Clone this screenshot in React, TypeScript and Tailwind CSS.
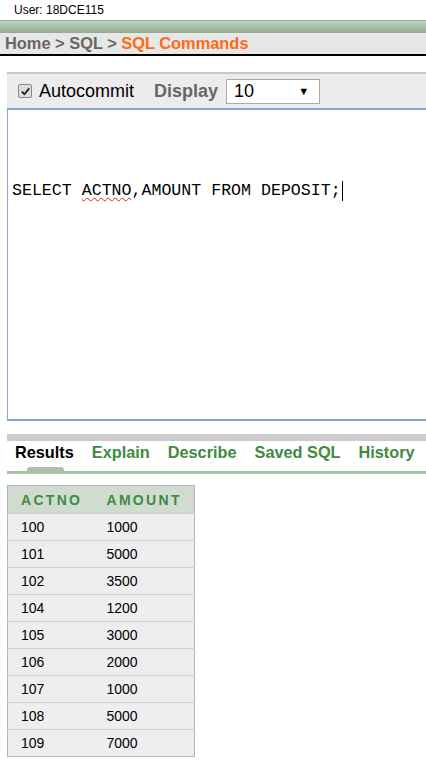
const rows = [
  ['100', '1000'],
  ['101', '5000'],
  ['102', '3500'],
  ['104', '1200'],
  ['105', '3000'],
  ['106', '2000'],
  ['107', '1000'],
  ['108', '5000'],
  ['109', '7000'],
]

const tabs = ['Explain', 'Describe', 'Saved SQL', 'History']

export default function App() {
  return (
    <div className="h-[765px] w-[426px] overflow-hidden bg-white font-['Liberation_Sans',Arial,sans-serif]">
      {/* user line */}
      <div className="h-[20px] pl-[14px] pt-[2px] text-[12px] leading-[16px] text-black">User: 18DCE115</div>

      {/* green header bar */}
      <div className="h-[13px] border-t border-[#a0a8a0] bg-gradient-to-b from-[#bcd3bc] to-[#91ab91]" />

      {/* breadcrumb */}
      <div className="flex h-[23px] items-center border-b-2 border-black bg-[#e6e7e6] pl-[5px] text-[16.4px] font-bold">
        <span className="text-[#666]">Home &gt; SQL &gt;&nbsp;</span>
        <span className="text-[#ff6a13]">SQL Commands</span>
      </div>

      {/* toolbar */}
      <div className="ml-[7px] mt-[16px] flex h-[36px] items-center border-t-2 border-[#c8c8c8] bg-[#ececec]">
        <div className="ml-[11px] flex h-[14px] w-[14px] items-center justify-center rounded-[2px] border border-[#8a8a8a] bg-[#dcdcdc]">
          <svg viewBox="0 0 12 12" className="h-[11px] w-[11px]">
            <path d="M2 6.2 L4.8 9 L10 2.6" fill="none" stroke="#222" strokeWidth="2" />
          </svg>
        </div>
        <span className="ml-[7px] text-[18px] text-black">Autocommit</span>
        <span className="ml-[20px] text-[18px] font-bold text-[#666]">Display</span>
        <div className="ml-[8px] flex h-[25px] w-[94px] items-center justify-between border border-[#a9a9a9] bg-white pl-[7px] pr-[10px]">
          <span className="text-[18px] text-black">10</span>
          <span className="text-[11px] text-black">▼</span>
        </div>
      </div>

      {/* sql editor */}
      <div className="ml-[7px] h-[313px] border-y-2 border-l border-y-[#7ea6dc] border-l-[#8aa8d0] bg-white">
        <div className="flex items-center pt-[69px] pl-[4px] font-['Liberation_Mono','Courier_New',monospace] text-[16.6px] text-black">
          <span>SELECT&nbsp;</span>
          <span className="underline decoration-wavy decoration-[#e02020] decoration-1 underline-offset-2">ACTNO</span>
          <span>,AMOUNT FROM DEPOSIT;</span>
          <span className="ml-[1px] h-[20px] w-px bg-black" />
        </div>
      </div>

      {/* tabs */}
      <div className="ml-[7px] mt-[13px] h-[7px] bg-[#cccccc]" />
      <div className="ml-[7px] flex h-[30px] items-start gap-[18px] pl-[8px] pt-[2px] text-[16.3px] font-bold leading-[18px]">
        <span className="text-black">Results</span>
        {tabs.map((t) => (
          <span key={t} className="text-[#3f8a3f]">
            {t}
          </span>
        ))}
      </div>
      <div className="relative ml-[7px] h-[3px] bg-[#abbfab]">
        <div className="absolute bottom-[3px] left-[20px] h-[4px] w-[37px] rounded-t-[3px] bg-[#abbfab]" />
      </div>

      {/* results table */}
      <table className="ml-[7px] mt-[11px] w-[188px] border-collapse border border-[#b4b4b4] text-[14px]">
        <thead>
          <tr className="h-[28px] bg-[#d1dcd1] text-left text-[14px] font-bold tracking-[2.3px] text-[#3f8a3f]">
            <th className="pl-[13px] pt-[2px] font-bold">ACTNO</th>
            <th className="pl-[7px] pt-[2px] font-bold">AMOUNT</th>
          </tr>
        </thead>
        <tbody>
          {rows.map(([a, b]) => (
            <tr key={a} className="h-[27px] border-t border-[#cfcfcf] bg-[#eeeeee] text-black">
              <td className="w-[92px] pl-[13px]">{a}</td>
              <td className="pl-[7px]">{b}</td>
            </tr>
          ))}
        </tbody>
      </table>
    </div>
  )
}
